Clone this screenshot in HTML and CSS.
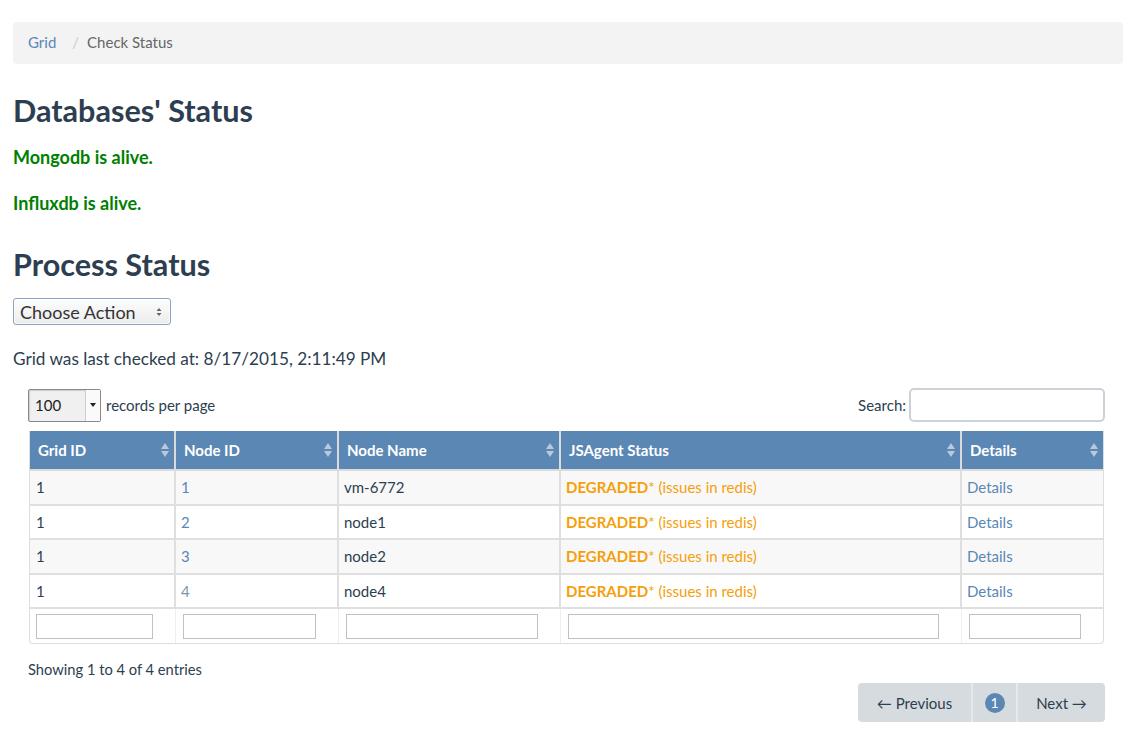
FILE: index.html
```html
<!DOCTYPE html>
<html>
<head>
<meta charset="utf-8">
<link rel="stylesheet" href="styles.css">
</head>
<body>
<div class="page">
  <ol class="breadcrumb">
    <li><a href="#">Grid</a></li>
    <li class="sep">/</li>
    <li class="active">Check Status</li>
  </ol>

  <h2 class="title">Databases' Status</h2>
  <p class="alive">Mongodb is alive.</p>
  <p class="alive">Influxdb is alive.</p>

  <h2 class="title title-process">Process Status</h2>
  <div class="action">
    <span class="action-label">Choose Action</span>
    <svg class="updown" width="6" height="10" viewBox="0 0 6 10"><path d="M0.5 4 L3 1 L5.5 4 Z M0.5 6 L3 9 L5.5 6 Z" fill="#666"/></svg>
  </div>
  <p class="checked">Grid was last checked at: 8/17/2015, 2:11:49 PM</p>

  <div class="dt">
    <div class="dt-top">
      <div class="length">
        <div class="len-select"><span class="len-val">100</span><span class="len-btn"><svg width="6" height="4" viewBox="0 0 6 4"><path d="M0 0 L6 0 L3 4 Z" fill="#222"/></svg></span></div>
        <span>records per page</span>
      </div>
      <div class="search">
        <span>Search:</span>
        <span class="search-input"></span>
      </div>
    </div>

    <div class="tbl-wrap">
      <table class="tbl">
        <thead>
          <tr>
            <th class="c1">Grid ID<span class="sort"></span></th>
            <th class="c2">Node ID<span class="sort"></span></th>
            <th class="c3">Node Name<span class="sort"></span></th>
            <th class="c4">JSAgent Status<span class="sort"></span></th>
            <th class="c5">Details<span class="sort"></span></th>
          </tr>
        </thead>
        <tbody>
          <tr class="odd"><td>1</td><td><a href="#">1</a></td><td>vm-6772</td><td><b class="deg">DEGRADED</b><span class="deg-n">* (issues in redis)</span></td><td><a href="#">Details</a></td></tr>
          <tr><td>1</td><td><a href="#">2</a></td><td>node1</td><td><b class="deg">DEGRADED</b><span class="deg-n">* (issues in redis)</span></td><td><a href="#">Details</a></td></tr>
          <tr class="odd"><td>1</td><td><a href="#">3</a></td><td>node2</td><td><b class="deg">DEGRADED</b><span class="deg-n">* (issues in redis)</span></td><td><a href="#">Details</a></td></tr>
          <tr><td>1</td><td><a href="#" class="visited">4</a></td><td>node4</td><td><b class="deg">DEGRADED</b><span class="deg-n">* (issues in redis)</span></td><td><a href="#">Details</a></td></tr>
        </tbody>
        <tfoot>
          <tr>
            <td><span class="filter"></span></td>
            <td><span class="filter"></span></td>
            <td><span class="filter"></span></td>
            <td><span class="filter"></span></td>
            <td><span class="filter"></span></td>
          </tr>
        </tfoot>
      </table>
    </div>

    <div class="info">Showing 1 to 4 of 4 entries</div>
    <div class="pager-row">
      <div class="pager">
        <span class="pg prev">← Previous</span>
        <span class="pg num"><span class="badge">1</span></span>
        <span class="pg next">Next →</span>
      </div>
    </div>
  </div>
</div>
</body>
</html>
```

FILE: styles.css
```css
html, body {
  margin: 0;
  padding: 0;
  background: #fff;
}
body {
  font-family: Lato, "Open Sans", sans-serif;
  color: #2c3e50;
  font-size: 15px;
}
a {
  color: #5b87b5;
  text-decoration: none;
}
.page {
  padding: 22px 1px 0 13px;
}
.breadcrumb {
  list-style: none;
  margin: 0;
  height: 42px;
  box-sizing: border-box;
  padding: 0 15px 2px;
  display: flex;
  align-items: center;
  background: #f3f3f3;
  border-radius: 4px;
  font-size: 15px;
}
.breadcrumb li.sep {
  color: #ccc;
  padding: 0 8px 0 16px;
}
.breadcrumb li.active {
  color: #666;
}
.title {
  margin: 29px 0 0;
  font-size: 30.6px;
  font-weight: 700;
  line-height: 36px;
}
.title-process {
  margin-top: 32px;
}
.alive {
  margin: 16px 0 0;
  color: #008000;
  font-weight: 700;
  font-size: 18px;
  line-height: 24px;
}
.alive + .alive {
  margin-top: 22px;
}
.action {
  margin-top: 15px;
  width: 158px;
  height: 27px;
  box-sizing: border-box;
  border: 1px solid #8aa4c2;
  border-radius: 3px;
  background: linear-gradient(#fdfdfd, #ececec);
  display: flex;
  align-items: center;
  justify-content: space-between;
  padding: 0 8px 0 6px;
  font-size: 18px;
  color: #333;
  box-shadow: inset 0 0 0 1px rgba(255,255,255,0.6);
}
.checked {
  margin: 22px 0 0;
  font-size: 17.2px;
  line-height: 24px;
}
.dt {
  padding: 17px 18px 0 15px;
}
.dt-top {
  display: flex;
  justify-content: space-between;
  align-items: center;
}
.length {
  display: flex;
  align-items: center;
  gap: 5px;
  font-size: 15px;
}
.len-select {
  width: 73px;
  height: 33px;
  box-sizing: border-box;
  border: 1px solid #888;
  border-radius: 2px;
  background: #f0f0f0;
  display: flex;
  align-items: center;
  justify-content: space-between;
  box-shadow: inset 1px 1px 1px rgba(0,0,0,0.15);
}
.len-val {
  padding-left: 6px;
  color: #222;
  font-size: 15px;
}
.len-btn {
  width: 14px;
  height: 31px;
  border-left: 1px solid #ccc;
  background: #fafafa;
  display: flex;
  align-items: center;
  justify-content: center;
}
.search {
  display: flex;
  align-items: center;
  gap: 3px;
  font-size: 15px;
}
.search-input {
  display: block;
  width: 196px;
  height: 34px;
  box-sizing: border-box;
  border: 2px solid #ccd2d8;
  border-radius: 5px;
}
.tbl-wrap {
  margin-top: 9px;
  border: 1px solid #ddd;
  border-top: none;
  border-radius: 0 0 4px 4px;
  margin-left: 1px;
  margin-right: 1px;
}
.tbl {
  width: 100%;
  border-collapse: collapse;
  table-layout: fixed;
}
.tbl th {
  background: #5b87b5;
  color: #fff;
  font-weight: 700;
  font-size: 15px;
  text-align: left;
  height: 38px;
  padding: 0 8px;
  position: relative;
  border-left: 2px solid #dbdbdb;
  border-bottom: 2px solid #dbdbdb;
}
.tbl th:first-child {
  border-left: none;
}
.sort {
  position: absolute;
  right: 5px;
  top: 12px;
  width: 0;
  height: 0;
}
.sort::before, .sort::after {
  content: "";
  position: absolute;
  right: 0;
  border-left: 4px solid transparent;
  border-right: 4px solid transparent;
}
.sort::before {
  top: 0;
  border-bottom: 6px solid #b9c9da;
}
.sort::after {
  top: 8px;
  border-top: 6px solid #b9c9da;
}
.c1 { width: 128px; }
.c2 { width: 145px; }
.c3 { width: 204px; }
.c4 { width: 383px; }
.tbl td {
  height: 32.5px;
  padding: 0 5px;
  font-size: 15px;
  border-left: 2px solid #dfdfdf;
  border-bottom: 2px solid #dfdfdf;
  color: #2c3e50;
}
.tbl td:first-child {
  border-left: none;
  padding-left: 6px;
}
.tbl tr.odd td {
  background: #f8f8f8;
}
.tbl tfoot td {
  border: none;
  border-left: 1px solid #eee;
  height: 34px;
  padding: 0 7px;
}
.tbl tfoot td:first-child {
  border-left: none;
}
.filter {
  display: block;
  height: 25px;
  box-sizing: border-box;
  border: 1px solid #bcc2c8;
  margin-right: 15px;
  margin-top: 1px;
}
.deg {
  color: #f5a00a;
  font-weight: 700;
}
.deg-n {
  color: #f5a00a;
}
a.visited {
  color: #7c93ab;
}
.info {
  margin-top: 16px;
  font-size: 14.7px;
}
.pager-row {
  display: flex;
  justify-content: flex-end;
  margin-top: 5px;
}
.pager {
  display: flex;
  height: 39px;
  background: #d6dbdf;
  border-radius: 4px;
  overflow: hidden;
}
.pg {
  display: flex;
  align-items: center;
  justify-content: center;
  font-size: 15px;
  color: #2c3e50;
}
.prev { width: 113px; }
.num {
  width: 43px;
  border-left: 2px solid #e6e9ec;
  border-right: 2px solid #e6e9ec;
}
.next { width: 87px; }
.badge {
  width: 20px;
  height: 20px;
  border-radius: 50%;
  background: #5b87b5;
  color: #fff;
  display: flex;
  align-items: center;
  justify-content: center;
  font-size: 14px;
}
```
